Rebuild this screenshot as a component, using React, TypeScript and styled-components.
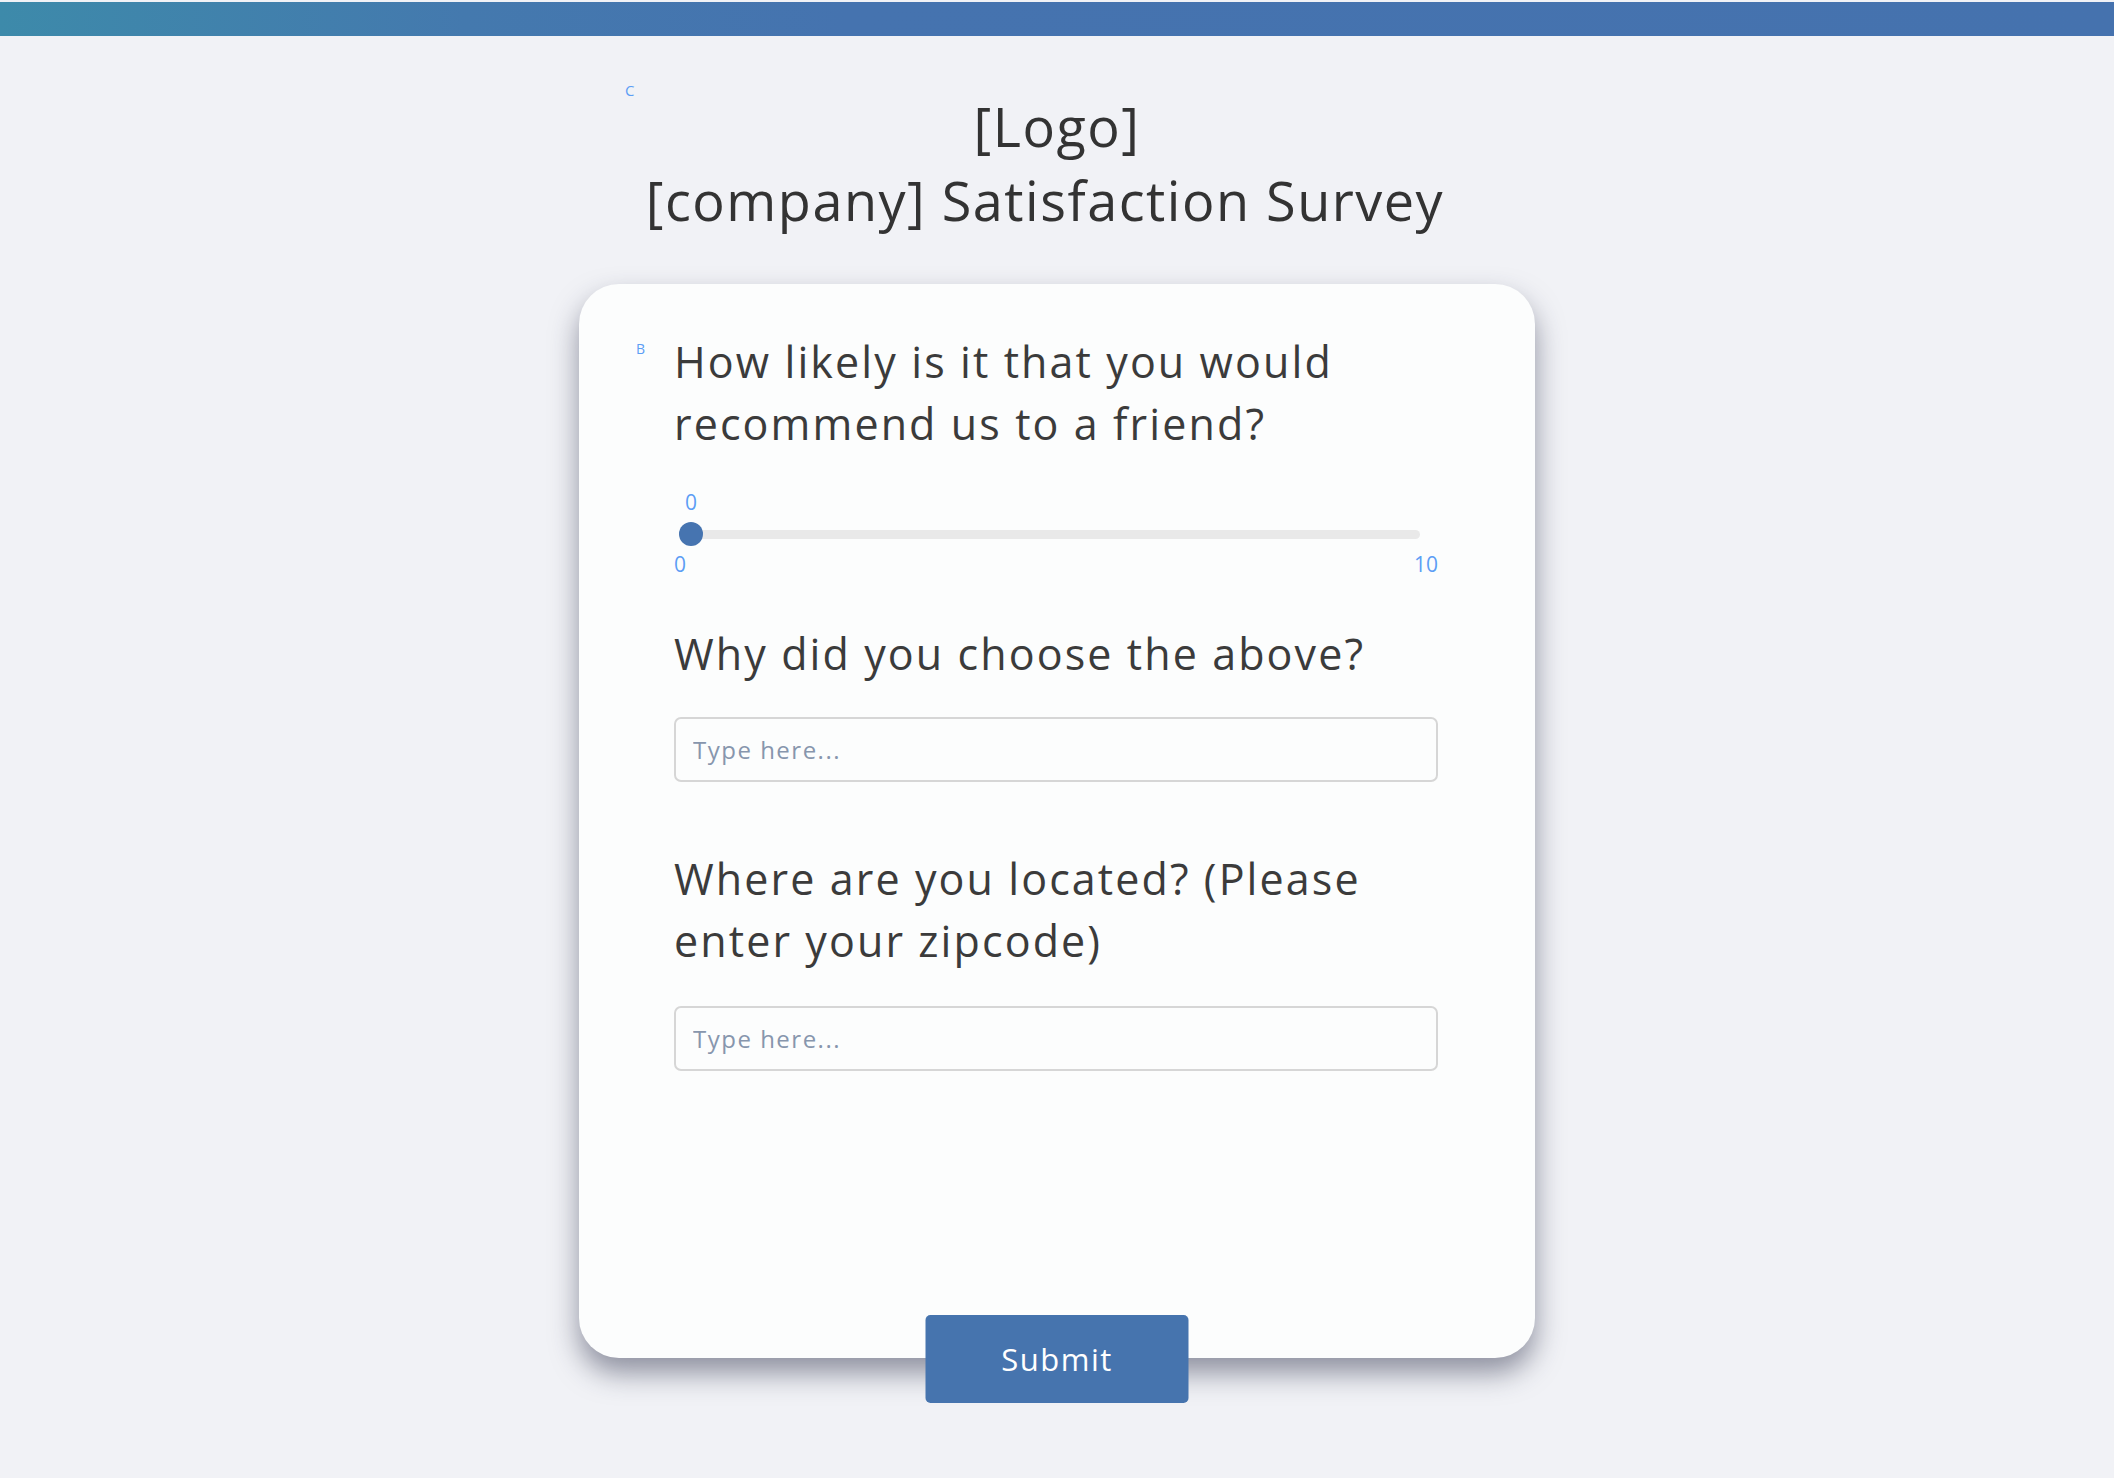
import React, { useState } from 'react'
import styled, { createGlobalStyle } from 'styled-components'

const GlobalStyle = createGlobalStyle`
  html, body {
    margin: 0;
    padding: 0;
    background: #f1f2f6;
    font-family: "Open Sans", "Noto Sans", Arial, sans-serif;
    color: #333333;
  }
  * {
    box-sizing: border-box;
  }
`

const Page = styled.div`
  width: 100%;
  min-height: 1478px;
  padding-top: 2px;
`

const TopBar = styled.div`
  height: 34px;
  width: 100%;
  background: linear-gradient(90deg, #3d8aaa 0%, #4479ae 22%, #4573af 40%, #4572ae 100%);
`

const Header = styled.header`
  position: relative;
  width: 956px;
  margin: 53px auto 0;
  text-align: center;
`

const Marker = styled.span<{ $top: number; $left: number; $size: number }>`
  position: absolute;
  top: ${(p) => p.$top}px;
  left: ${(p) => p.$left}px;
  font-size: ${(p) => p.$size}px;
  line-height: ${(p) => p.$size}px;
  color: #5c9ef5;
`

const Title = styled.h1<{ $shift?: number }>`
  margin: 0;
  padding-right: ${(p) => p.$shift || 0}px;
  font-size: 54px;
  line-height: 74px;
  font-weight: 400;
  letter-spacing: 1.5px;
  color: #333333;
`

const Card = styled.form`
  position: relative;
  width: 956px;
  height: 1074px;
  margin: 47px auto 0;
  padding: 47px 97px 0 95px;
  background: #fcfdfd;
  border-radius: 40px;
  box-shadow: 0 15px 28px rgba(45, 50, 75, 0.5);
`

const Question = styled.label`
  display: block;
  margin: 0;
  font-size: 43px;
  line-height: 62px;
  font-weight: 400;
  letter-spacing: 2.1px;
  color: #3b3b3b;
`

const SliderBlock = styled.div`
  margin-top: 35px;
  color: #5c9ef5;
  font-size: 21px;
  line-height: 24px;
`

const ValueRow = styled.div`
  padding-left: 5px;
`

const ValueLabel = styled.div`
  width: 24px;
  text-align: center;
`

const TrackRow = styled.div`
  position: relative;
  height: 24px;
  margin: 8px 18px 0 5px;
  display: flex;
  align-items: center;
`

const Track = styled.div`
  width: 100%;
  height: 9px;
  border-radius: 5px;
  background: #e9e9e9;
`

const Thumb = styled.div`
  position: absolute;
  top: 0;
  width: 24px;
  height: 24px;
  border-radius: 50%;
  background: #4674b0;
`

const RangeLabels = styled.div`
  display: flex;
  justify-content: space-between;
  margin-top: 6px;
`

const Field = styled.div<{ $top: number }>`
  margin-top: ${(p) => p.$top}px;
`

const TextInput = styled.input<{ $top: number }>`
  display: block;
  width: 100%;
  height: 65px;
  margin-top: ${(p) => p.$top}px;
  padding: 0 17px;
  border: 2px solid #d6d6d6;
  border-radius: 7px;
  background: #fcfdfd;
  font-family: inherit;
  font-size: 24px;
  letter-spacing: 1.5px;
  color: #333333;
  outline: none;

  &::placeholder {
    color: #8796ad;
    font-weight: 400;
  }
`

const SubmitButton = styled.button`
  position: absolute;
  left: 50%;
  bottom: -45px;
  transform: translateX(-50%);
  width: 263px;
  height: 88px;
  border: none;
  border-radius: 5px;
  background: #4674ae;
  color: #ffffff;
  font-family: inherit;
  font-size: 31px;
  letter-spacing: 1.5px;
  font-weight: 400;
  cursor: pointer;
`

export default function App() {
  const [score] = useState(0)
  const max = 10

  return (
    <Page>
      <GlobalStyle />
      <TopBar />
      <Header>
        <Marker $top={-6} $left={46} $size={15}>C</Marker>
        <Title>[Logo]</Title>
        <Title $shift={24}>[company] Satisfaction Survey</Title>
      </Header>
      <Card onSubmit={(e) => e.preventDefault()}>
        <Marker $top={58} $left={57} $size={14}>B</Marker>
        <Question>How likely is it that you would recommend us to a friend?</Question>
        <SliderBlock>
          <ValueRow>
            <ValueLabel>{score}</ValueLabel>
          </ValueRow>
          <TrackRow>
            <Track />
            <Thumb style={{ left: `calc(${(score / max) * 100}% - ${(score / max) * 24}px)` }} />
          </TrackRow>
          <RangeLabels>
            <span>0</span>
            <span>{max}</span>
          </RangeLabels>
        </SliderBlock>
        <Field $top={47}>
          <Question>Why did you choose the above?</Question>
          <TextInput $top={32} placeholder="Type here..." />
        </Field>
        <Field $top={66}>
          <Question>Where are you located? (Please enter your zipcode)</Question>
          <TextInput $top={34} placeholder="Type here..." />
        </Field>
        <SubmitButton type="submit">Submit</SubmitButton>
      </Card>
    </Page>
  )
}
